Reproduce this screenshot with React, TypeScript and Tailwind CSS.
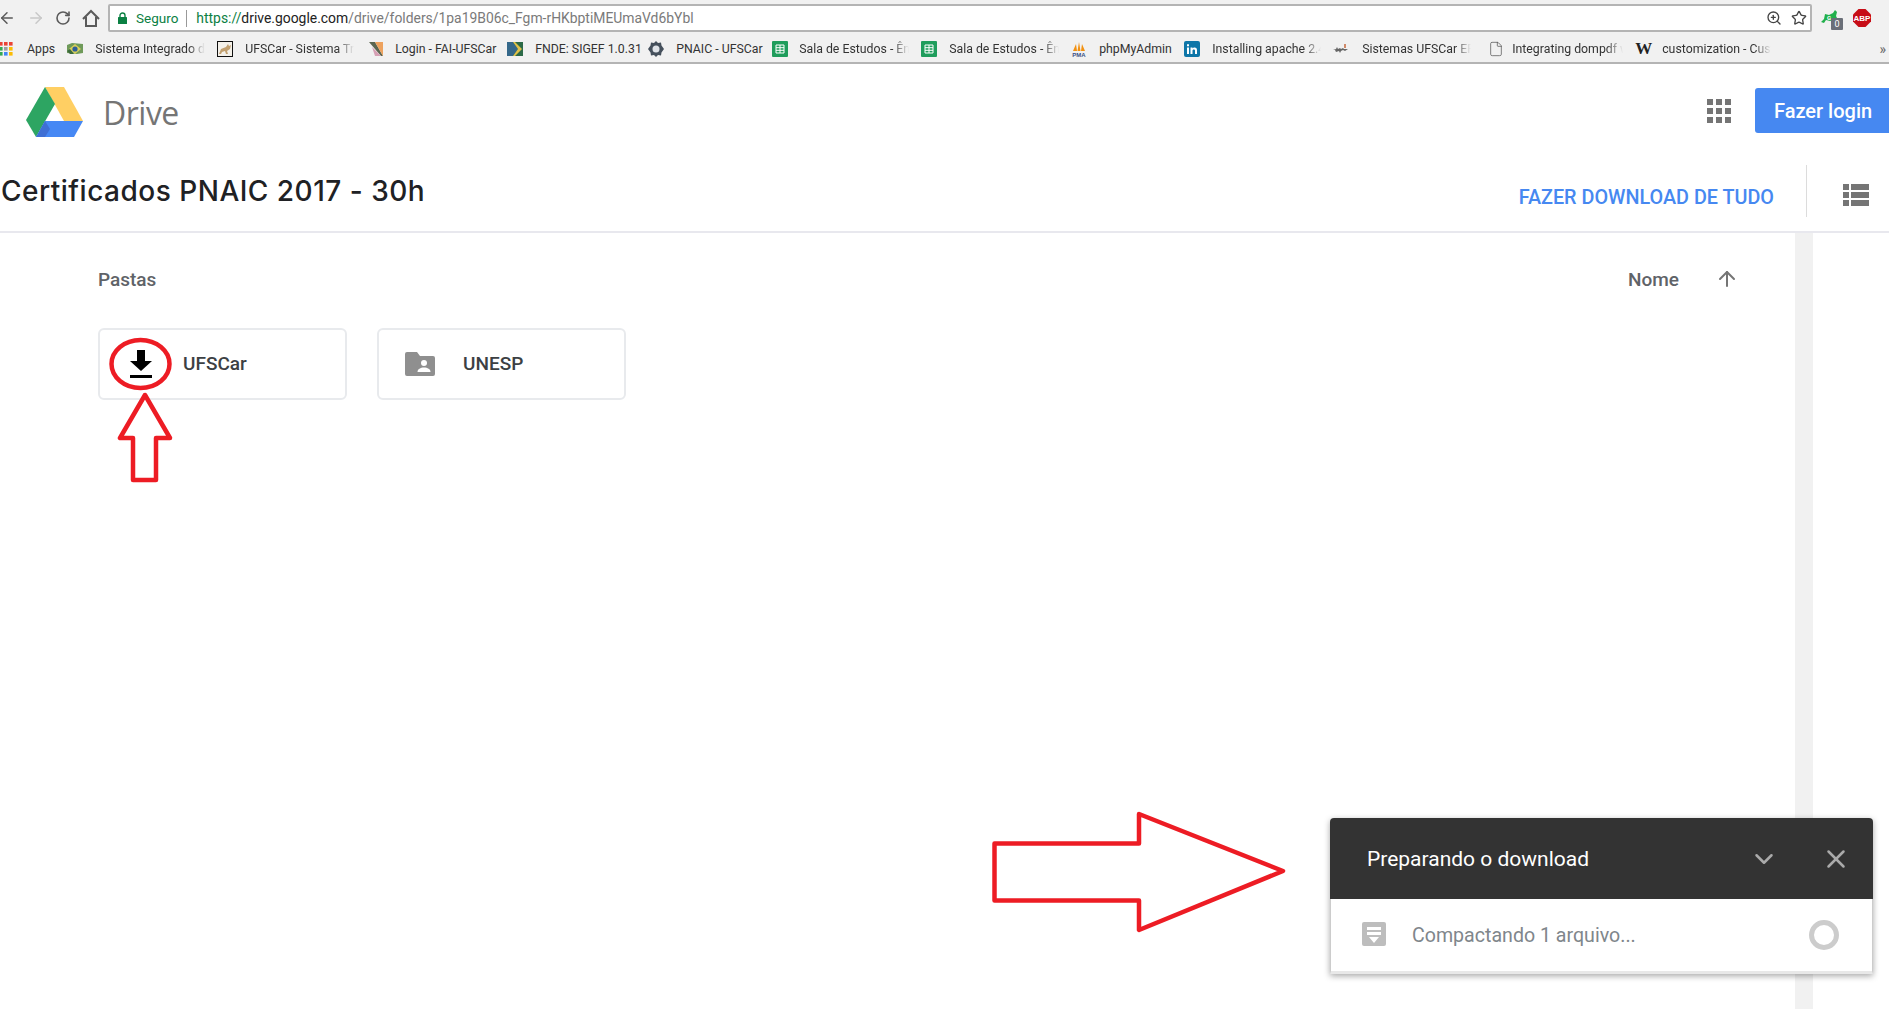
import { ArrowLeft, ArrowRight, RotateCw, ZoomIn, Star, ChevronDown, X, ArrowUp, File } from "lucide-react";
import type { ReactNode } from "react";

const sheetIcon = (
  <svg viewBox="0 0 16 16" className="w-4 h-4">
    <rect width="16" height="16" rx="1" fill="#1f9d5c" />
    <path d="M4 4h8v8H4zM4 6.7h8M4 9.3h8M8 4v8" fill="none" stroke="#fff" strokeWidth="1" />
  </svg>
);

const appsIcon = (
  <svg viewBox="0 0 13 16" className="w-[13px] h-4">
    {[
      ["#ea4335", "#ea4335", "#ea4335"],
      ["#34a853", "#9e9e9e", "#fbbc05"],
      ["#34a853", "#4285f4", "#fbbc05"],
    ].map((row, y) =>
      row.map((c, x) => <rect key={`${x}${y}`} x={x * 5 - 1} y={y * 5 + 1} width="3.6" height="3.6" fill={c} />),
    )}
  </svg>
);

const bookmarks: { icon: ReactNode; label: string; gap: number; next: number; width: number; fade?: boolean }[] = [
  {
    icon: (
      <svg viewBox="0 0 16 16" className="w-4 h-4">
        <path d="M0 4l5-2 11 1v9l-6 1-10-1z" fill="#6f9a5a" />
        <path d="M8 3l6 5-6 5-6-5z" fill="#d9cf5a" />
        <circle cx="8" cy="8" r="2.6" fill="#2f5f9a" />
        <path d="M0 10l3 3h4l-4-5z" fill="#3c6b3c" />
      </svg>
    ),
    label: "Sistema Integrado de Gestão",
    gap: 12,
    next: 12,
    width: 110,
    fade: true,
  },
  {
    icon: (
      <svg viewBox="0 0 16 16" className="w-4 h-4">
        <rect x="0.5" y="0.5" width="15" height="15" fill="#f4f1ea" stroke="#111" />
        <path d="M2 13l2-5 5-2 2-3 1 2 2-1-1 4-3 2 1 3H9L8 10l-3 1-1 2z" fill="#c2a070" />
      </svg>
    ),
    label: "UFSCar - Sistema Trâmite",
    gap: 12,
    next: 14,
    width: 109,
    fade: true,
  },
  {
    icon: (
      <svg viewBox="0 0 16 16" className="w-4 h-4">
        <path d="M1 1h6l8 14h-2z" fill="#5b6650" />
        <path d="M7 1h8v14z" fill="#eda25e" />
        <path d="M4 6l9 9H7z" fill="#d6a0b4" />
      </svg>
    ),
    label: "Login - FAI-UFSCar",
    gap: 11,
    next: 12,
    width: 100,
  },
  {
    icon: (
      <svg viewBox="0 0 16 16" className="w-4 h-4">
        <rect y="1" width="16" height="14" fill="#2c6a48" />
        <path d="M0 1h6l5 7-5 7H0z" fill="#35688a" />
        <path d="M6 1h2l7 7-7 7H6l5-7z" fill="#e0c14a" />
      </svg>
    ),
    label: "FNDE: SIGEF 1.0.31",
    gap: 12,
    next: 15,
    width: 98,
  },
  {
    icon: (
      <svg viewBox="0 0 16 16" className="w-4 h-4">
        <path d="M8 0l2 2 3-.5.5 3L16 8l-2.500 3.500-.5 3-3-.5-2 2-2-2-3 .5-.5-3L0 8l2.500-3.500.5-3 3 .5z" fill="#45505c" />
        <circle cx="8" cy="8" r="3.500" fill="#dfe3e8" />
      </svg>
    ),
    label: "PNAIC - UFSCar",
    gap: 12,
    next: 12,
    width: 84,
  },
  { icon: sheetIcon, label: "Sala de Estudos - Ênfase", gap: 11, next: 12, width: 110, fade: true },
  { icon: sheetIcon, label: "Sala de Estudos - Ênfase", gap: 12, next: 12, width: 110, fade: true },
  {
    icon: (
      <svg viewBox="0 0 16 16" className="w-4 h-4">
        <path d="M2 10l3-7 1 7zM6.500 10l1.500-9 1.500 9zM10 10l1-7 3 7z" fill="#f29111" />
        <text x="8" y="15.500" textAnchor="middle" fontSize="6" fontWeight="700" fill="#3c4f85" fontFamily="Liberation Sans, sans-serif">
          PMA
        </text>
      </svg>
    ),
    label: "phpMyAdmin",
    gap: 12,
    next: 13,
    width: 72,
  },
  {
    icon: (
      <svg viewBox="0 0 16 16" className="w-4 h-4">
        <rect width="16" height="16" rx="2" fill="#0e76a8" />
        <path d="M3 6.5h2V13H3zM3 3.2h2v2H3zM6.5 6.5h2v1c1-1.5 4.5-1.7 4.5 1.5V13h-2V9.6c0-1.7-2.5-1.5-2.5 0V13h-2z" fill="#fff" />
      </svg>
    ),
    label: "Installing apache 2.4 on",
    gap: 12,
    next: 12,
    width: 109,
    fade: true,
  },
  {
    icon: (
      <svg viewBox="0 0 16 16" className="w-4 h-4">
        <path d="M0 9l3-1 1-2 1 2 2-1 1 1 2-1 1 1 4 0-3 2-2-1-2 1-1 2-1-2-3 1-1-2z" fill="#666" />
        <rect x="11" y="3" width="2" height="4" fill="#d08a6a" />
      </svg>
    ),
    label: "Sistemas UFSCar ERP",
    gap: 13,
    next: 17,
    width: 109,
    fade: true,
  },
  {
    icon: <File className="w-[16px] h-[16px] text-[#444]" strokeWidth={1} />,
    label: "Integrating dompdf with",
    gap: 8,
    next: 12,
    width: 111,
    fade: true,
  },
  {
    icon: <span className="w-4 text-[17px] leading-4 font-bold text-[#222] font-['Liberation_Serif',serif]">W</span>,
    label: "customization - Customize",
    gap: 11,
    next: 0,
    width: 109,
    fade: true,
  },
];

function Bookmarks() {
  return (
    <div className="h-[28px] shrink-0 bg-[#f1f1f1] border-b-2 border-[#b4b4b4] flex items-center text-[#333] text-[12.3px] font-['Roboto',sans-serif] overflow-hidden">
      <div className="flex items-center">
        {appsIcon}
        <span className="ml-[14px] mr-[12px]">Apps</span>
      </div>
      {bookmarks.map((b, i) => (
        <div key={i} className="flex items-center" style={{ marginRight: b.next }}>
          <span className="flex items-center justify-center w-4 h-4" style={{ marginRight: b.gap }}>
            {b.icon}
          </span>
          <span
            className={
              b.fade
                ? "block whitespace-nowrap overflow-hidden [mask-image:linear-gradient(to_right,black_85%,transparent)]"
                : "block whitespace-nowrap"
            }
            style={{ width: b.width }}
          >
            {b.label}
          </span>
        </div>
      ))}
      <span className="ml-auto mr-[3px] text-[#666] text-[14px]">»</span>
    </div>
  );
}

function BrowserBar() {
  return (
    <div className="h-[36px] shrink-0 bg-[#f1f1f1] flex items-center font-['Roboto',sans-serif]">
      <ArrowLeft className="w-[18px] h-[18px] -ml-[2px] text-[#5a5a5a]" strokeWidth={2} />
      <ArrowRight className="w-[18px] h-[18px] ml-[11px] text-[#c8c8c8]" strokeWidth={2} />
      <RotateCw className="w-[16px] h-[16px] ml-[10px] text-[#5a5a5a]" strokeWidth={2.4} />
      <svg viewBox="0 0 18 18" className="ml-[11px] w-[18px] h-[18px] fill-none stroke-[#5a5a5a] stroke-2">
        <path d="M1 10l8-8 8 8M4 8v9h10V8" />
      </svg>
      <div className="ml-[8px] w-[1704px] h-[28px] bg-white border-2 border-[#b4b4b4] rounded-[2px] flex items-center text-[14px]">
        <svg viewBox="0 0 9 12" className="ml-[8px] w-[9px] h-[12px]">
          <path d="M2 5V3.500a2.500 2.500 0 015 0V5" fill="none" stroke="#0b8043" strokeWidth="1.400" />
          <rect y="5" width="9" height="7" rx="0.5" fill="#0b8043" />
        </svg>
        <span className="ml-[9px] text-[#0b8043] text-[13.5px]">Seguro</span>
        <span className="ml-[8px] h-[17px] w-px bg-[#999]" />
        <span className="ml-[9px] whitespace-nowrap text-[#7a7a7a] text-[13.9px]">
          <span className="text-[#0b8043]">https://</span>
          <span className="text-[#222]">drive.google.com</span>
          /drive/folders/1pa19B06c_Fgm-rHKbptiMEUmaVd6bYbl
        </span>
        <ZoomIn className="w-[16px] h-[16px] ml-auto text-[#444]" strokeWidth={2} />
        <Star className="w-[16px] h-[16px] ml-[9px] mr-[3px] text-[#444]" strokeWidth={2} />
      </div>
      <div className="relative ml-[9px] w-[16px] h-[16px]">
        <svg viewBox="0 0 16 16" className="w-4 h-4">
          <path d="M0 12l3-3 1-5 4 1 4-2 2-3 2 2-1 4 1 2-4 2-3 1-4-1-2 3z" fill="#21b04b" />
          <text x="8" y="9.500" textAnchor="middle" fontSize="6" fontWeight="700" fill="#fff" fontFamily="Roboto, sans-serif">
            G
          </text>
        </svg>
        <span className="absolute left-[10px] top-[8px] w-[12px] h-[12px] bg-[#6a6f78] rounded-[1px] text-white text-[9px] leading-[12px] text-center">
          0
        </span>
      </div>
      <svg viewBox="0 0 18 18" className="ml-[16px] w-[18px] h-[18px]">
        <path d="M5.500 0h7L18 5.500v7L12.500 18h-7L0 12.500v-7z" fill="#c70d17" />
        <text x="9" y="12" textAnchor="middle" fontSize="8" fontWeight="700" fill="#fff" fontFamily="Liberation Sans, sans-serif">
          ABP
        </text>
      </svg>
    </div>
  );
}

function DriveLogo() {
  return (
    <svg viewBox="0 0 57 50" className="w-[57px] h-[50px]">
      <path d="M19 0h19l19 34H38z" fill="#ffcf63" />
      <path d="M19 0L0 33l10 17 19-33z" fill="#2da562" />
      <path d="M10 50h38l9-16H19z" fill="#4688f4" />
      <path d="M10 50l9-16 5 8-5 8z" fill="#3f6fd4" />
    </svg>
  );
}

function FolderCard({ icon, name, textGap }: { icon: ReactNode; name: string; textGap: number }) {
  return (
    <div className="w-[249px] h-[72px] border-2 border-[#e8eaed] rounded-[6px] flex items-center text-[#3c4043] text-[19px] font-medium">
      <span className="ml-[26px] flex items-center justify-center w-[30px]">{icon}</span>
      <span style={{ marginLeft: textGap }}>{name}</span>
    </div>
  );
}

function DownloadPanel() {
  return (
    <div className="absolute left-[1330px] top-[818px] w-[543px] h-[156px] flex flex-col rounded-t-[4px] shadow-[0_2px_6px_rgba(0,0,0,0.35)] bg-white overflow-hidden">
      <div className="h-[81px] bg-[#333333] flex items-center text-white text-[21px] pl-[37px]">
        <span className="pt-[2px]">Preparando o download</span>
        <ChevronDown className="w-[30px] h-[30px] ml-auto text-[#aaaaaa]" strokeWidth={2} />
        <X className="w-[30px] h-[30px] ml-[42px] mr-[22px] text-[#aaaaaa]" strokeWidth={2} />
      </div>
      <div className="flex-1 flex items-center border-x border-b-[3px] border-x-[#cccccc] border-b-[#e8e8e8] pl-[31px] pr-[33px] text-[#80868b] text-[19.6px]">
        <svg viewBox="0 0 24 24" className="w-[24px] h-[24px] -mt-[2px]">
          <rect width="24" height="24" rx="2" fill="#bdbdbd" />
          <path d="M5 5h14v3H5zM5 10h14v3H5zM7 15h10l-5 6z" fill="#fff" />
        </svg>
        <span className="ml-[26px] pt-[2px]">Compactando 1 arquivo...</span>
        <span className="ml-auto w-[30px] h-[30px] rounded-full border-[5px] border-[#cccccc]" />
      </div>
    </div>
  );
}

export default function App() {
  return (
    <div className="relative h-screen w-full overflow-hidden bg-white flex flex-col font-['Roboto',sans-serif]">
      <BrowserBar />
      <Bookmarks />

      <header className="h-[93px] flex items-center pr-0 shrink-0">
        <div className="ml-[26px] mt-[3px] flex items-center">
          <DriveLogo />
          <span className="ml-[20px] mt-[2px] text-[32px] text-[#757575] font-['Open_Sans',sans-serif] tracking-[-0.5px]">Drive</span>
        </div>
        <svg viewBox="0 0 24 24" className="ml-auto w-[24px] h-[24px] fill-[#757575]">
          {[0, 9, 18].map((y) =>
            [0, 9, 18].map((x) => <rect key={`${x}${y}`} x={x} y={y} width="6" height="6" />),
          )}
        </svg>
        <button className="ml-[24px] w-[134px] h-[45px] bg-[#4688f1] rounded-l-[3px] text-white text-[20px] font-medium text-left pl-[19px]">
          Fazer login
        </button>
      </header>

      <div className="h-[76px] shrink-0 border-b-2 border-[#e8e8ee] flex items-start">
        <h1 className="ml-[1px] mt-[15px] text-[28px] leading-[38px] font-medium text-[#202124] font-['Inter',sans-serif] tracking-[0.5px]">
          Certificados PNAIC 2017 - 30h
        </h1>
        <a className="ml-auto mt-[29px] text-[#4688f1] text-[19.8px] leading-[24px] font-medium">FAZER DOWNLOAD DE TUDO</a>
        <span className="ml-[32px] mt-[8px] w-px h-[52px] bg-[#dcdcdc]" />
        <svg viewBox="0 0 26 22" className="ml-[36px] mr-[20px] mt-[27px] w-[26px] h-[22px] fill-[#757575]">
          <path d="M0 0h6v6H0zM8 0h18v6H8zM0 8h6v6H0zM8 8h18v6H8zM0 16h6v6H0zM8 16h18v6H8z" />
        </svg>
      </div>

      <div className="flex-1 flex">
        <main className="w-[1795px] pl-[98px] pr-[56px] pt-[35px]">
          <div className="h-[24px] flex items-center text-[#5f6368] font-medium text-[19px]">
            <span>Pastas</span>
            <span className="ml-auto">Nome</span>
            <ArrowUp className="ml-[36px] -mt-[2px] w-[24px] h-[24px] text-[#757575]" strokeWidth={2} />
          </div>
          <div className="mt-[36px] flex gap-[30px]">
            <FolderCard
              name="UFSCar"
              textGap={27}
              icon={
                <svg viewBox="0 0 24 28" className="w-[24px] h-[28px]">
                  <path d="M8 0h8v11h7L12 21 1 11h7zM1 25h22v3H1z" fill="#000" />
                </svg>
              }
            />
            <FolderCard
              name="UNESP"
              textGap={28}
              icon={
                <svg viewBox="0 0 30 24" className="w-[30px] h-[24px]">
                  <path d="M2 0h10l3 4h13a2 2 0 012 2v16a2 2 0 01-2 2H2a2 2 0 01-2-2V2a2 2 0 012-2z" fill="#8f8f8f" />
                  <circle cx="19" cy="11" r="3" fill="#fff" />
                  <path d="M12.5 20c0-3 3-4.500 6.500-4.500s6.500 1.500 6.500 4.500z" fill="#fff" />
                </svg>
              }
            />
          </div>
        </main>
        <div className="w-[18px] bg-[#f1f1f1]" />
      </div>

      {/* red annotations drawn on top of the screenshot */}
      <svg viewBox="0 0 65 54" className="absolute left-[108px] top-[337px] w-[65px] h-[54px]">
        <ellipse cx="32.500" cy="27" rx="29" ry="24" fill="none" stroke="#ed1c24" strokeWidth="4.500" />
      </svg>
      <svg viewBox="0 0 60 92" className="absolute left-[115px] top-[392px] w-[60px] h-[92px]">
        <path d="M30 3L5 46h13v42h23V46h14z" fill="#fff" stroke="#ed1c24" strokeWidth="4.500" strokeLinejoin="round" />
      </svg>
      <svg viewBox="0 0 300 124" className="absolute left-[990px] top-[810px] w-[300px] h-[124px]">
        <path d="M4.500 33.500H149V4L293 61 149 120V90.500H4.500z" fill="#fff" stroke="#ed1c24" strokeWidth="4.500" strokeLinejoin="round" />
      </svg>

      <DownloadPanel />
    </div>
  );
}
